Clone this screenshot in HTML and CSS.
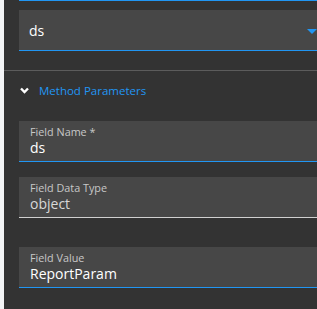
FILE: index.html
```html
<!DOCTYPE html>
<html lang="en">
<head>
    <meta charset="UTF-8">
    <title>Method Parameters</title>
    <link rel="stylesheet" href="styles.css">
</head>
<body>

<div class="panel">
    <div class="prev-field"></div>

    <div class="select-box">
        <span class="select-value">ds</span>
        <span class="select-arrow"></span>
    </div>

    <div class="section">
        <div class="section-header">
            <svg class="chevron" width="9" height="7" viewBox="0 0 9 7">
                <path d="M1 1.5 L4.5 5 L8 1.5" fill="none" stroke="#fff" stroke-width="2.4"/>
            </svg>
            <span class="section-title">Method Parameters</span>
        </div>

        <div class="field focused">
            <label>Field Name *</label>
            <div class="field-value">ds</div>
        </div>

        <div class="field readonly">
            <label>Field Data Type</label>
            <div class="field-value">object</div>
        </div>

        <div class="field focused last">
            <label>Field Value</label>
            <div class="field-value">ReportParam</div>
        </div>
    </div>
</div>

</body>
</html>
```

FILE: styles.css
```css
body {
    margin: 0;
    background: #f3f4f6;
    font-family: 'Open Sans', sans-serif;
    height: 309px;
    overflow: hidden;
}
.panel {
    margin-left: 4px;
    height: 309px;
    background: #333333;
}
.prev-field {
    margin-left: 15px;
    border-top: 1px solid #2196f3;
    height: 9px;
}
.select-box {
    margin-left: 15px;
    height: 40px;
    background: #474747;
    border-bottom: 1px solid #2196f3;
    display: flex;
    align-items: center;
    justify-content: space-between;
    padding-left: 10px;
}
.select-value {
    color: #fff;
    font-size: 14px;
}
.select-arrow {
    width: 0;
    height: 0;
    border-left: 5px solid transparent;
    border-right: 5px solid transparent;
    border-top: 5px solid #2196f3;
    margin-top: 3px;
}
.section {
    margin-top: 19px;
    border-top: 1px solid #5c5c5c;
    padding-left: 15px;
}
.section-header {
    display: flex;
    align-items: center;
    height: 37px;
    padding-left: 1px;
    margin-top: 1px;
}
.chevron {
    margin-right: 10px;
}
.section-title {
    color: #2196f3;
    font-size: 11.5px;
}
.field {
    background: #474747;
    height: 40px;
    padding-left: 11px;
    border-bottom: 1px solid #2196f3;
    margin-top: 12px;
    display: flex;
    flex-direction: column;
    justify-content: center;
}
.field label {
    color: #c8c8c8;
    font-size: 10.8px;
    line-height: 14px;
}
.field-value {
    color: #fff;
    font-size: 14px;
    line-height: 18px;
}
.field.readonly {
    margin-top: 15px;
    border-bottom-color: #d0d0d0;
}
.field.readonly .field-value {
    color: #d8d8d8;
}
.field.last {
    margin-top: 29px;
}
```
